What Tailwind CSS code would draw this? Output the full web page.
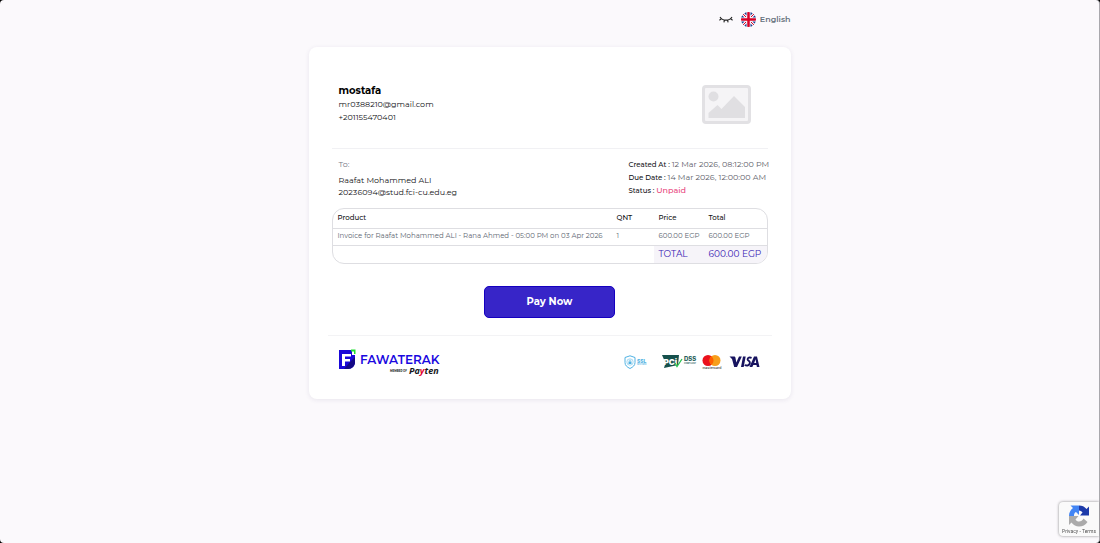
<!DOCTYPE html>
<html lang="en">
<head>
<meta charset="utf-8">
<meta name="viewport" content="width=device-width, initial-scale=1">
<title>Invoice</title>
<script src="https://cdn.jsdelivr.net/npm/@tailwindcss/browser@4"></script>
</head>
<body class="bg-black font-[Montserrat,Inter,sans-serif] text-[#101014]">
<div class="min-h-screen rounded-[4px] border-r border-[#a9a8ad] bg-[#fbf9fc]">
  <div class="mx-auto w-full max-w-[482px]">
    <header class="flex h-[47px] items-start justify-end gap-2 pt-3">
      <button type="button" aria-label="Toggle dark mode" class="mt-1">
        <svg class="h-2 w-[14px]" viewBox="0 0 14 8" fill="none" stroke="#222" stroke-width="1.100"><path d="M1 1C3.500 5.200 10.500 5.200 13 1M2.600 2.600L.4 4.200M11.400 2.600L13.600 4.200M5.500 4L4.900 6.400M8.500 4L9.100 6.400"/></svg>
      </button>
      <button type="button" class="flex items-center gap-1 text-[8px] font-semibold leading-[15px] text-[#66717c]">
        <svg class="size-[15px]" viewBox="0 0 30 30"><defs><clipPath id="round"><circle cx="15" cy="15" r="15"/></clipPath></defs><g clip-path="url(#round)"><path fill="#f6f4f8" d="M0 0h30v30H0z"/><path fill="#1d3f91" d="M4 0h7v7zM26 0h-7v7zM0 4v7h7zM30 4v7h-7zM0 26v-7h7zM30 26v-7h-7zM4 30h7v-7zM26 30h-7v-7z"/><path stroke="#d80027" stroke-width="2" d="M3 3l7 7M27 3l-7 7M3 27l7-7M27 27l-7-7"/><path fill="#d80027" d="M12.500 0h5v12.500H30v5H17.500V30h-5V17.500H0v-5h12.500z"/></g></svg>
        English
      </button>
    </header>

    <main class="rounded-lg bg-white px-[23px] pb-[21px] shadow-[0_1px_5px_rgba(40,30,90,0.09)]">
      <section class="flex h-[102px] items-start justify-between border-b border-[#f1f1f4] pl-[7px] pr-[17px] pt-9">
        <div class="text-[8px] leading-[13px]">
          <h1 class="text-[10px] font-bold leading-[15px] text-black">mostafa</h1>
          <p>mr0388210@gmail.com</p>
          <p>+201155470401</p>
        </div>
        <svg class="mt-0.5 h-[39px] w-[49px]" viewBox="0 0 49 39" role="img" aria-label="Company logo"><rect x="1.500" y="1.500" width="46" height="36" rx="2.500" fill="#f5f4f6" stroke="#e2e1e4" stroke-width="3"/><circle cx="11.500" cy="11.500" r="5" fill="#e0dfe2"/><path fill="#e0dfe2" d="M6.500 33v-5l9-8 4 4L32 11l11 11v11z"/></svg>
      </section>

      <section class="flex justify-between pl-[7px] pt-[9px] text-[8px] leading-3">
        <div>
          <p class="mb-1 text-[#777a86]">To:</p>
          <p>Raafat Mohammed ALI</p>
          <p>20236094@stud.fci-cu.edu.eg</p>
        </div>
        <div class="w-[139px] whitespace-nowrap text-[7px] font-medium leading-[13px]">
          <p>Created At : <span class="text-[8px] font-normal text-[#5c5c68]">12 Mar 2026, 08:12:00 PM</span></p>
          <p>Due Date : <span class="text-[8px] font-normal text-[#5c5c68]">14 Mar 2026, 12:00:00 AM</span></p>
          <p>Status : <span class="text-[8px] text-[#e8457c]">Unpaid</span></p>
        </div>
      </section>

      <div class="mt-[10px] overflow-hidden rounded-xl border border-[#dedee2]">
        <table class="w-full table-fixed border-collapse text-left text-[7px]">
          <colgroup><col><col class="w-[42px]"><col class="w-[50px]"><col class="w-[63px]"></colgroup>
          <thead>
            <tr class="h-[19px] border-b border-[#dedee2]"><th class="pl-[5px] font-medium">Product</th><th class="pl-[5px] font-medium">QNT</th><th class="pl-[5px] font-medium">Price</th><th class="pl-[5px] font-medium">Total</th></tr>
          </thead>
          <tbody>
            <tr class="h-[17px] whitespace-nowrap border-b border-[#dedee2] text-[#5c6570]"><td class="pl-[5px]">Invoice for Raafat Mohammed ALI - Rana Ahmed - 05:00 PM on 03 Apr 2026</td><td class="pl-[5px]">1</td><td class="pl-[5px]">600.00 EGP</td><td class="pl-[5px]">600.00 EGP</td></tr>
          </tbody>
          <tfoot>
            <tr class="h-[18px] text-[9px] leading-[12px] text-[#3a1cb4]"><td colspan="2"></td><td class="bg-[#f6f4f9] pl-[5px]">TOTAL</td><td class="whitespace-nowrap bg-[#f6f4f9] pl-[5px]">600.00 EGP</td></tr>
          </tfoot>
        </table>
      </div>

      <div class="flex justify-center pb-[17px] pt-[22px]">
        <button type="button" class="h-8 w-[131px] rounded-[5px] border border-[#1500c0] bg-[#3725c8] pb-0.5 text-[10px] font-bold text-white">Pay Now</button>
      </div>

      <footer class="-mx-1 flex items-start justify-between border-t border-[#f3f3f5] pl-[10px] pr-[11px] pt-3">
        <a href="#" aria-label="Fawaterak, member of Payten">
          <svg class="h-[30px] w-[103px]" viewBox="0 0 103 30">
            <path fill="#1a08d8" d="M1 2h13v5h3v7c0 4-3 7-7 7H1z"/><path fill="#120784" d="M10 21c4 0 7-3 7-7V9l-5 5-6 7z"/><path fill="#20e030" d="M13 1.500h4.500V6H16V3.500h-3z"/><path fill="#fff" d="M4 18V6h9v2.500H7V11h5v2.500H7V18z"/>
            <text x="22" y="16" font-family="Montserrat,Lato,sans-serif" font-size="12" font-weight="600" fill="#1a08e0">FAWATERAK</text>
            <text x="52" y="24" font-family="Montserrat,Inter,sans-serif" font-size="2.600" font-weight="700" fill="#222">MEMBER OF</text>
            <text x="71" y="26" font-family="Open Sans,sans-serif" font-size="9" font-weight="700" font-style="italic" fill="#16161a">Pa<tspan fill="#e3002b">y</tspan>ten</text>
          </svg>
        </a>
        <svg class="mt-[7px] h-[17px] w-[137px]" viewBox="0 0 137 17" role="img" aria-label="SSL, PCI DSS, Mastercard, Visa">
          <g fill="none" stroke="#50b2e3"><path d="M6 .8L11 2.500v5c0 3-2 4.500-5 6-3-1.500-5-3-5-6v-5z"/><circle cx="6" cy="7" r="3.200" stroke-width=".5"/></g><path fill="#50b2e3" d="M4.500 6.500h3V9h-3z"/><path d="M5.200 6.500v-.8c0-1 1.600-1 1.600 0v.8" fill="none" stroke="#50b2e3" stroke-width=".6"/>
          <text x="13" y="8" font-family="Inter,sans-serif" font-size="5" font-weight="800" fill="#50b2e3">SSL</text><text x="13" y="10" font-family="Inter,sans-serif" font-size="2" font-weight="600" fill="#50b2e3">SECURED</text>
          <path fill="#16504c" d="M38 0h17l-1 10-14 3 1.500-5z"/><text x="39.500" y="10" font-family="Inter,sans-serif" font-size="8" font-weight="900" fill="#fff">PCi</text><path d="M51 8l2 3.500L58 4" fill="none" stroke="#27c250" stroke-width="1.300"/>
          <text x="60" y="6" font-family="Inter,sans-serif" font-size="6" font-weight="800" fill="#285e5a">DSS</text><text x="60" y="8.500" font-family="Inter,sans-serif" font-size="2" font-weight="600" fill="#285e5a">COMPLIANT</text>
          <circle cx="84" cy="5.500" r="5.500" fill="#eb101b"/><circle cx="91" cy="5.500" r="5.500" fill="#f79e1b"/><path fill="#ff5f00" d="M87.500 1.200a5.500 5.500 0 010 8.600 5.500 5.500 0 010-8.600z"/><text x="78.500" y="13.500" font-family="Inter,sans-serif" font-size="3.500" font-weight="500" fill="#333">mastercard</text>
          <path fill="#17135f" d="M105.500 1.500h4.500c1 0 1.300.5 1.500 1.500l.8 4.500 2.700-6h2.800L113 12h-2.800L108 4zM119 1.500h2.700l-2 10.500H117zM130 1.500h3L135.500 12h-2.600l-.4-2h-3.200l-1 2h-2.800zM130.200 8h2l-.7-3.800z"/><path fill="none" stroke="#17135f" stroke-width="1.900" d="M127.600 2.900c-2-.8-4-.2-4 1.300 0 1.800 2.600 1.600 2.300 3.800-.3 2.500-3 3.100-5.200 2"/>
        </svg>
      </footer>
    </main>
  </div>

  <aside class="fixed bottom-[7px] right-px flex h-[34px] w-10 flex-col items-center rounded-l-sm bg-[#fafafa] pt-[3px] shadow-[0_0_3px_#888]">
    <svg class="size-[22px] shrink-0" viewBox="0 0 44 44" role="img" aria-label="reCAPTCHA"><path fill="#1c3aa9" d="M42 21V3l-5 5C33 3 28 1 22 1v10c3 0 6 2 7 4l-5 6z"/><path fill="#4285f4" d="M22 1H5l5 5C5 10 2 15 2 22h10c0-4 1-7 4-8l6 6z"/><path fill="#ababab" d="M2 22v18l5-5c4 5 9 8 15 8 7 0 13-3 17-9l-8-7c-2 4-5 6-9 6-3 0-5-1-7-4l6-7z"/></svg>
    <p class="whitespace-nowrap font-[Roboto,sans-serif] text-[5px] leading-[8px] text-[#555]"><a href="#">Privacy</a> - <a href="#">Terms</a></p>
  </aside>
</div>
</body>
</html>
